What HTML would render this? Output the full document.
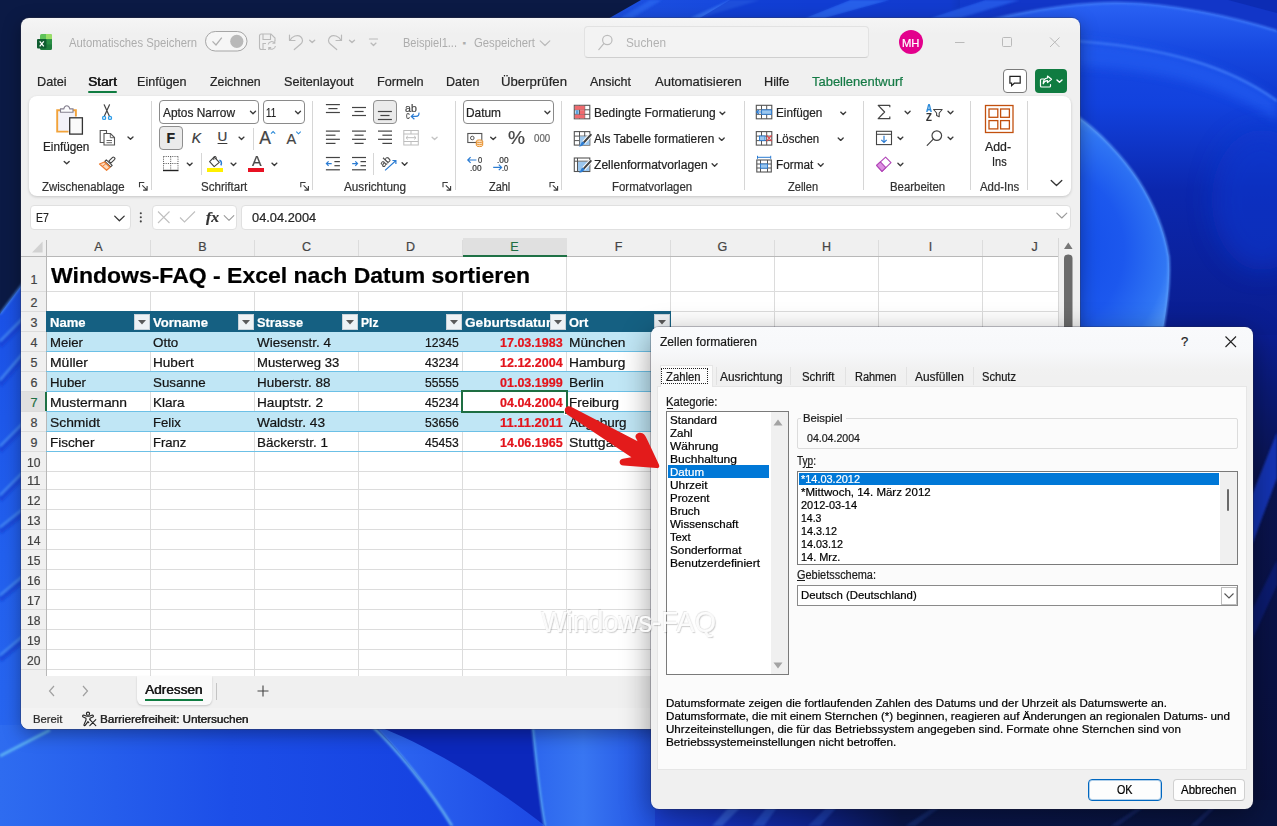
<!DOCTYPE html><html lang="de"><head><meta charset="utf-8"><title>Excel nach Datum sortieren</title><style>
*{box-sizing:border-box;margin:0;padding:0}
html,body{width:1277px;height:826px;overflow:hidden;background:#0b1b46;font-family:"Liberation Sans",sans-serif}
.t{position:absolute;white-space:nowrap;transform-origin:0 50%;display:inline-block;-webkit-text-stroke:.22px}
.a{position:absolute}
#wp{position:absolute;left:0;top:0}
#xl{position:absolute;left:21px;top:17.5px;width:1058.5px;height:711.5px;background:linear-gradient(#f5f5f5 0,#f0f0f0 16px);border-radius:8px;box-shadow:0 0 0 1px rgba(60,60,70,.32),0 5px 18px rgba(0,0,0,.35);overflow:hidden}
#dlg{position:absolute;left:651px;top:327px;width:602px;height:481.5px;background:linear-gradient(#f9fafc 0,#f7f8fa 24px,#f1f1f1 42px,#f0f0f0 50px);border-radius:8px;box-shadow:0 0 0 1px rgba(40,40,60,.28),0 8px 30px rgba(0,0,0,.4);overflow:hidden}
.card{position:absolute;background:#fff;border-radius:8px;box-shadow:0 1px 3px rgba(0,0,0,.18)}
.box{position:absolute;background:#fff;border:1px solid #e0e0e0;border-radius:4px}
.sep{position:absolute;width:1px;background:#d6d6d6}
svg{position:absolute;overflow:visible}
</style></head><body><svg id="wp" width="1277" height="826" viewBox="0 0 1277 826">
<defs>
<filter id="b2" x="-20%" y="-20%" width="140%" height="140%"><feGaussianBlur stdDeviation="1.2"/></filter>
<filter id="b6" x="-20%" y="-20%" width="140%" height="140%"><feGaussianBlur stdDeviation="5"/></filter>
<filter id="b12" x="-30%" y="-30%" width="160%" height="160%"><feGaussianBlur stdDeviation="12"/></filter>
<linearGradient id="gt" x1="0" y1="0" x2="1" y2="0"><stop offset="0" stop-color="#1c50e0"/><stop offset=".5" stop-color="#1444dc"/><stop offset="1" stop-color="#1848de"/></linearGradient>
<linearGradient id="gr" x1="0" y1="0" x2="0" y2="1"><stop offset="0" stop-color="#1a4ee6"/><stop offset=".3" stop-color="#1242de"/><stop offset=".55" stop-color="#0b27ae"/><stop offset="1" stop-color="#0a1c8c"/></linearGradient>
<linearGradient id="gAB" x1="0" y1="0" x2="0" y2="1"><stop offset="0" stop-color="#2a62f4"/><stop offset=".5" stop-color="#1648e0"/><stop offset="1" stop-color="#0e36cc"/></linearGradient>
<radialGradient id="gC" cx="1040" cy="250" r="140" gradientUnits="userSpaceOnUse"><stop offset="0" stop-color="#0f48e6"/><stop offset=".6" stop-color="#1c58ee"/><stop offset=".9" stop-color="#3076f4"/><stop offset="1" stop-color="#4a90f8"/></radialGradient>
<linearGradient id="gL" x1="0" y1="0" x2="0" y2="1"><stop offset="0" stop-color="#1a50e6"/><stop offset=".5" stop-color="#2260ee"/><stop offset="1" stop-color="#2a68f0"/></linearGradient>
<linearGradient id="gB" x1="0" y1="0" x2="1" y2="0"><stop offset="0" stop-color="#2e6cf0"/><stop offset=".35" stop-color="#1c4ee8"/><stop offset="1" stop-color="#0f36da"/></linearGradient>
<linearGradient id="gP" x1="0" y1="0" x2="1" y2="0"><stop offset="0" stop-color="#2e68f2"/><stop offset="1" stop-color="#1c48e4"/></linearGradient>
<linearGradient id="gE" x1="0" y1="0" x2="1" y2="0"><stop offset="0" stop-color="#2c66ee"/><stop offset=".4" stop-color="#3876f2"/><stop offset="1" stop-color="#2050e2"/></linearGradient>
</defs>
<rect width="1277" height="826" fill="#0b1a45"/>
<!-- right region (extends under the window) -->
<g>
<rect x="960" y="0" width="317" height="345" fill="url(#gr)"/>
<path d="M960 0H1277V31C1230 16 1170 4 1124 3C1090 2 1040 8 990 20L960 20Z" fill="#1236c8"/>
<path d="M990 20C1040 8 1090 2 1124 3C1170 4 1230 16 1277 31V101C1234 70 1171 48 1078 40L990 38Z" fill="url(#gAB)"/>
<path d="M1078 40C1171 48 1234 70 1277 101V120C1230 90 1170 70 1078 66Z" fill="#2864f6" opacity=".55" filter="url(#b6)"/>
<path d="M990 20C1040 8 1090 2 1124 3C1170 4 1230 16 1277 31" stroke="#3f7af8" stroke-width="2.2" fill="none" filter="url(#b2)"/>
<path d="M1060 40C1171 46 1234 70 1277 101" stroke="#3d78f8" stroke-width="2.2" fill="none" filter="url(#b2)"/>
<path d="M1228 0L1277 13V0Z" fill="#0c2cb4"/>
<ellipse cx="1262" cy="200" rx="50" ry="70" fill="#1038d0" opacity=".55" filter="url(#b12)"/>
<path d="M1078 117C1098 131 1122 156 1138 180C1152 202 1164 228 1168.600 257C1170.500 282 1167 308 1161 340H1078Z" fill="url(#gC)"/>
<path d="M1078 117C1098 131 1122 156 1138 180C1152 202 1164 228 1168.600 257C1170.500 282 1167 308 1161 340" stroke="#5a9cfa" stroke-width="2.2" fill="none" filter="url(#b2)" opacity=".9"/>
</g>
<!-- top strip -->
<linearGradient id="gt2" x1="606" y1="0" x2="1010" y2="0" gradientUnits="userSpaceOnUse"><stop offset="0" stop-color="#1c50e0"/><stop offset=".5" stop-color="#1444dc"/><stop offset=".85" stop-color="#1440d4"/><stop offset="1" stop-color="#1440d4" stop-opacity="0"/></linearGradient>
<path d="M641 0H1010V20H606Z" fill="url(#gt2)"/>
<g filter="url(#b2)" opacity=".75"><path d="M690 18L730 0H760L700 18Z" fill="#3a78f4"/><path d="M805 18L850 0H890L825 18Z" fill="#2e6af0"/><path d="M930 18L985 0H1020L960 18Z" fill="#2a62ee"/><path d="M620 18L650 0H662L632 18Z" fill="#2a66f0"/></g>
<path d="M730 0L700 18H805L850 0Z" fill="#0f38cc" opacity=".55"/><path d="M890 0L825 18H930L985 0Z" fill="#0f36c8" opacity=".45"/>
<!-- right strip beside dialog -->
<linearGradient id="gS" x1="0" y1="327" x2="0" y2="826" gradientUnits="userSpaceOnUse"><stop offset="0" stop-color="#0b1e96"/><stop offset=".12" stop-color="#0a1a78"/><stop offset=".3" stop-color="#0a1450"/><stop offset="1" stop-color="#080f3a"/></linearGradient>
<rect x="1246" y="335" width="31" height="491" fill="url(#gS)"/>
<path d="M1277 432V478L1252 545V495Z" fill="#1838c0" filter="url(#b2)" opacity=".9"/>
<path d="M1277 560V585L1252 640V610Z" fill="#10248a" filter="url(#b2)" opacity=".6"/>
<!-- left strip -->
<path d="M0 314L24 282V826H0Z" fill="url(#gL)"/>
<g filter="url(#b2)"><g stroke="#0f3cd0" stroke-width="5" fill="none" opacity=".55"><path d="M0 346L24 322"/><path d="M0 385L24 357"/><path d="M0 451L24 427"/><path d="M0 500L24 476"/><path d="M0 532L24 513"/><path d="M0 600L24 580"/><path d="M0 660L24 640"/></g>
<g stroke="#4e92f6" stroke-width="2" fill="none" opacity=".85"><path d="M0 314L24 282"/><path d="M0 341L24 317"/><path d="M0 380L24 352"/><path d="M0 446L24 422"/><path d="M0 495L24 471"/><path d="M0 527L24 508"/><path d="M0 595L24 575"/><path d="M0 655L24 635"/></g></g>
<!-- bottom -->
<rect x="0" y="725" width="660" height="101" fill="url(#gB)"/>
<path d="M371 725C396 748 430 790 452 826H560V725Z" fill="#0c28bc"/>
<path d="M374 725C430 745 500 790 545 826H452C430 790 398 748 374 725Z" fill="url(#gP)"/>
<path d="M371 725C396 748 430 790 452 826" stroke="#62b0f2" stroke-width="2.4" fill="none" filter="url(#b2)"/>
<path d="M532 725C536 760 540 800 545 826H660V725Z" fill="url(#gE)"/>
<path d="M532.500 725C536 760 540 800 545 826" stroke="#58a8f0" stroke-width="2" fill="none" filter="url(#b2)"/>
<path d="M0 756L50 730" stroke="#5cb0f4" stroke-width="3" fill="none" filter="url(#b2)"/>
<linearGradient id="gU" x1="651" y1="0" x2="1277" y2="0" gradientUnits="userSpaceOnUse"><stop offset="0" stop-color="#1c42da"/><stop offset=".1" stop-color="#1634c4"/><stop offset=".25" stop-color="#10269a"/><stop offset=".4" stop-color="#0a174e"/><stop offset="1" stop-color="#09143f"/></linearGradient><rect x="655" y="800" width="622" height="26" fill="url(#gU)"/><g filter="url(#b2)" opacity=".7"><path d="M712 826L730 806H742L722 826Z" fill="#3a6ce6"/><path d="M752 826L768 806H778L764 826Z" fill="#2c5ad8"/><path d="M808 826L828 806H838L820 826Z" fill="#2248c0"/><path d="M905 826L935 806H942L915 826Z" fill="#16307c"/><path d="M1110 826L1140 806H1146L1118 826Z" fill="#142a70"/><path d="M1190 826L1212 806H1217L1197 826Z" fill="#142a70"/></g>
</svg><div id="xl"></div><div class="card" style="left:29px;top:96px;width:1042px;height:100px"></div><div class="box" style="left:30px;top:204.5px;width:100.5px;height:25px"></div><div class="box" style="left:152px;top:204.5px;width:85px;height:25px"></div><div class="box" style="left:241px;top:204.5px;width:830px;height:25px"></div><span class="t" id="t0" style="font-size:12px;line-height:16px;top:34.5px;color:#adadad;left:69.4px;transform:scaleX(0.9406);-webkit-text-stroke:0;">Automatisches Speichern</span><span class="t" id="t1" style="font-size:12px;line-height:16px;top:34.5px;color:#adadad;left:403.4px;transform:scaleX(0.9199);-webkit-text-stroke:0;">Beispiel1...</span><span class="t" id="t2" style="font-size:9px;line-height:12px;top:36.8px;color:#adadad;left:462.5px;">▪</span><span class="t" id="t3" style="font-size:12px;line-height:16px;top:34.5px;color:#adadad;left:473.6px;transform:scaleX(0.9428);-webkit-text-stroke:0;">Gespeichert</span><div class="a" style="left:584px;top:26px;width:285px;height:32px;background:#f3f3f3;border:1px solid #e2e2e2;border-bottom-color:#cfcfcf;border-radius:4px"></div><span class="t" id="t4" style="font-size:12.5px;line-height:16px;top:34.5px;color:#b2b2b2;left:626.0px;transform:scaleX(0.9433);-webkit-text-stroke:0;">Suchen</span><div class="a" style="left:899px;top:30px;width:24px;height:24px;border-radius:50%;background:#e3008c"></div><span class="t" id="t5" style="font-size:11px;line-height:14px;top:35.5px;color:#fff;left:902.2px;transform:scaleX(1.0228);">MH</span><span class="t" id="t6" style="font-size:13.5px;line-height:18px;top:72.5px;color:#242424;left:37.1px;transform:scaleX(0.9392);">Datei</span><span class="t" id="t7" style="font-size:13.5px;line-height:18px;top:72.5px;color:#242424;left:137.1px;transform:scaleX(0.9306);">Einfügen</span><span class="t" id="t8" style="font-size:13.5px;line-height:18px;top:72.5px;color:#242424;left:210.0px;transform:scaleX(0.9127);">Zeichnen</span><span class="t" id="t9" style="font-size:13.5px;line-height:18px;top:72.5px;color:#242424;left:284.4px;transform:scaleX(0.9366);">Seitenlayout</span><span class="t" id="t10" style="font-size:13.5px;line-height:18px;top:72.5px;color:#242424;left:377.1px;transform:scaleX(0.9411);">Formeln</span><span class="t" id="t11" style="font-size:13.5px;line-height:18px;top:72.5px;color:#242424;left:446.3px;transform:scaleX(0.9297);">Daten</span><span class="t" id="t12" style="font-size:13.5px;line-height:18px;top:72.5px;color:#242424;left:501.2px;transform:scaleX(0.9771);">Überprüfen</span><span class="t" id="t13" style="font-size:13.5px;line-height:18px;top:72.5px;color:#242424;left:590.0px;transform:scaleX(0.9259);">Ansicht</span><span class="t" id="t14" style="font-size:13.5px;line-height:18px;top:72.5px;color:#242424;left:655.0px;transform:scaleX(0.9628);">Automatisieren</span><span class="t" id="t15" style="font-size:13.5px;line-height:18px;top:72.5px;color:#242424;left:764.2px;transform:scaleX(0.9402);">Hilfe</span><span class="t" id="t16" style="font-size:13.5px;line-height:18px;top:72.5px;color:#1a1a1a;left:88.2px;transform:scaleX(1.0100);text-shadow:.4px 0 0 #1a1a1a;">Start</span><span class="t" id="t17" style="font-size:13.5px;line-height:18px;top:72.5px;color:#157a45;left:812.0px;transform:scaleX(0.9602);">Tabellenentwurf</span><div class="a" style="left:88px;top:90.5px;width:29px;height:2.5px;border-radius:2px;background:#107c41"></div><div class="a" style="left:1003px;top:69px;width:23.8px;height:24px;background:#fff;border:1px solid #7a7a7a;border-radius:4px"></div><div class="a" style="left:1035px;top:69px;width:32px;height:24px;background:#107c41;border-radius:4px"></div><div class="sep" style="left:150.6px;top:101px;height:89px"></div><div class="sep" style="left:312px;top:101px;height:89px"></div><div class="sep" style="left:454.6px;top:101px;height:89px"></div><div class="sep" style="left:561.4px;top:101px;height:89px"></div><div class="sep" style="left:743.5px;top:101px;height:89px"></div><div class="sep" style="left:863.4px;top:101px;height:89px"></div><div class="sep" style="left:969.7px;top:101px;height:89px"></div><div class="sep" style="left:1027.4px;top:101px;height:89px"></div><span class="t" id="t18" style="font-size:12px;line-height:16px;top:139.0px;color:#242424;left:43.3px;transform:scaleX(0.9794);">Einfügen</span><span class="t" id="t19" style="font-size:12px;line-height:16px;top:178.6px;color:#333;left:42.0px;transform:scaleX(0.9514);">Zwischenablage</span><div class="a" style="left:159.3px;top:100px;width:100px;height:23.5px;background:#fff;border:1px solid #8a8a8a;border-radius:4px"></div><div class="a" style="left:262.6px;top:100px;width:42px;height:23.5px;background:#fff;border:1px solid #8a8a8a;border-radius:4px"></div><span class="t" id="t20" style="font-size:13px;line-height:17px;top:103.5px;color:#242424;left:162.9px;transform:scaleX(0.9143);">Aptos Narrow</span><span class="t" id="t21" style="font-size:13px;line-height:17px;top:103.5px;color:#242424;left:266.0px;transform:scaleX(0.7407);">11</span><div class="a" style="left:159.3px;top:126.3px;width:23.7px;height:23.4px;background:#ebebeb;border:1px solid #8f8f8f;border-radius:4px"></div><span class="t" id="t22" style="font-size:14px;line-height:18px;top:128.5px;color:#222;font-weight:700;left:166.5px;">F</span><span class="t" id="t23" style="font-size:14px;line-height:18px;top:128.5px;color:#3a3a3a;font-style:italic;left:191.7px;">K</span><span class="t" id="t24" style="font-size:13.5px;line-height:18px;top:128.0px;color:#3a3a3a;left:217.6px;text-decoration:underline;text-underline-offset:2px;">U</span><div class="sep" style="left:252.6px;top:127.5px;height:22px"></div><span class="t" id="t25" style="font-size:17.5px;line-height:23px;top:126.5px;color:#444;left:259.2px;">A</span><span class="t" id="t26" style="font-size:14.5px;line-height:19px;top:130.0px;color:#444;left:286.6px;">A</span><div class="sep" style="left:200.5px;top:152.5px;height:22px"></div><span class="t" id="t27" style="font-size:14px;line-height:18px;top:152.3px;color:#4a4a4a;left:251.7px;transform:scaleX(1.0274);">A</span><div class="a" style="left:206.7px;top:168.2px;width:16.3px;height:3.6px;background:#fff000"></div><div class="a" style="left:248px;top:168.2px;width:16px;height:3.6px;background:#e81123"></div><span class="t" id="t28" style="font-size:12px;line-height:16px;top:178.6px;color:#333;left:200.5px;transform:scaleX(0.9643);">Schriftart</span><div class="a" style="left:373.2px;top:100px;width:23.5px;height:23.8px;background:#ebebeb;border:1px solid #8f8f8f;border-radius:4px"></div><div class="sep" style="left:373.4px;top:152.5px;height:22px"></div><span class="t" id="t29" style="font-size:12px;line-height:16px;top:178.6px;color:#333;left:344.4px;transform:scaleX(0.9783);">Ausrichtung</span><div class="a" style="left:463.4px;top:100px;width:90.2px;height:23.5px;background:#fff;border:1px solid #8a8a8a;border-radius:4px"></div><span class="t" id="t30" style="font-size:13px;line-height:17px;top:103.5px;color:#242424;left:466.2px;transform:scaleX(0.9139);">Datum</span><span class="t" id="t31" style="font-size:19px;line-height:25px;top:125.0px;color:#444;left:507.5px;transform:scaleX(1.0055);">%</span><span class="t" id="t32" style="font-size:10.5px;line-height:14px;top:130.6px;color:#666;left:533.8px;transform:scaleX(0.9241);">000</span><span class="t" id="t33" style="font-size:12px;line-height:16px;top:178.6px;color:#333;left:489.2px;transform:scaleX(0.9124);">Zahl</span><span class="t" id="t34" style="font-size:12.5px;line-height:16px;top:105.0px;color:#242424;left:594.3px;transform:scaleX(0.9563);">Bedingte Formatierung</span><span class="t" id="t35" style="font-size:12.5px;line-height:16px;top:130.9px;color:#242424;left:594.3px;transform:scaleX(0.9478);">Als Tabelle formatieren</span><span class="t" id="t36" style="font-size:12.5px;line-height:16px;top:156.7px;color:#242424;left:594.3px;transform:scaleX(0.9675);">Zellenformatvorlagen</span><span class="t" id="t37" style="font-size:12px;line-height:16px;top:178.6px;color:#333;left:612.1px;transform:scaleX(0.9542);">Formatvorlagen</span><span class="t" id="t38" style="font-size:12.5px;line-height:16px;top:105.0px;color:#242424;left:776.3px;transform:scaleX(0.9400);">Einfügen</span><span class="t" id="t39" style="font-size:12.5px;line-height:16px;top:130.9px;color:#242424;left:776.3px;transform:scaleX(0.9119);">Löschen</span><span class="t" id="t40" style="font-size:12.5px;line-height:16px;top:156.7px;color:#242424;left:776.3px;transform:scaleX(0.9421);">Format</span><span class="t" id="t41" style="font-size:12px;line-height:16px;top:178.6px;color:#333;left:788.0px;transform:scaleX(0.9208);">Zellen</span><span class="t" id="t42" style="font-size:12px;line-height:16px;top:178.6px;color:#333;left:889.5px;transform:scaleX(0.9492);">Bearbeiten</span><span class="t" id="t43" style="font-size:13px;line-height:17px;top:137.5px;color:#242424;left:985.4px;transform:scaleX(0.9465);">Add-</span><span class="t" id="t44" style="font-size:13px;line-height:17px;top:153.1px;color:#242424;left:991.5px;transform:scaleX(0.8418);">Ins</span><span class="t" id="t45" style="font-size:12px;line-height:16px;top:178.6px;color:#333;left:979.5px;transform:scaleX(0.9478);">Add-Ins</span><span class="t" id="t46" style="font-size:13px;line-height:17px;top:208.5px;color:#242424;left:36.4px;transform:scaleX(0.8047);">E7</span><span class="t" id="t47" style="font-size:15px;line-height:20px;top:206.5px;color:#333;font-style:italic;left:205.5px;transform:scaleX(1.0400);font-family:'Liberation Serif',serif;font-weight:700;">fx</span><span class="t" id="t48" style="font-size:13px;line-height:17px;top:208.5px;color:#242424;left:251.6px;transform:scaleX(0.9865);">04.04.2004</span><div class="a" style="left:46px;top:256px;width:1012px;height:420px;background:#fff"></div><svg width="1277" height="826" style="left:0;top:0"><g stroke="#dcdcdc" stroke-width="1" fill="none"><path d="M150.5 240V676"/><path d="M254.5 240V676"/><path d="M358.5 240V676"/><path d="M462.5 240V676"/><path d="M566.5 240V676"/><path d="M670.5 240V676"/><path d="M774.5 240V676"/><path d="M878.5 240V676"/><path d="M982.5 240V676"/><path d="M21 291.5H1058"/><path d="M21 311.5H1058"/><path d="M21 331.5H1058"/><path d="M21 351.5H1058"/><path d="M21 371.5H1058"/><path d="M21 391.5H1058"/><path d="M21 411.5H1058"/><path d="M21 431.5H1058"/><path d="M21 451.5H1058"/><path d="M21 471.5H1058"/><path d="M21 489.5H1058"/><path d="M21 509.5H1058"/><path d="M21 529.5H1058"/><path d="M21 549.5H1058"/><path d="M21 569.5H1058"/><path d="M21 589.5H1058"/><path d="M21 609.5H1058"/><path d="M21 629.5H1058"/><path d="M21 649.5H1058"/><path d="M21 669.5H1058"/></g><path d="M21 256.5H1058M46.5 240V676" stroke="#b8b8b8" fill="none"/><path d="M1058.5 238V676" stroke="#d8d8d8" fill="none"/><path d="M42.6 241.5V252.6H32Z" fill="#d2d2d2"/></svg><div class="a" style="left:47px;top:257px;width:519px;height:34px;background:#fff"></div><div class="a" style="left:463px;top:238px;width:104px;height:19px;background:#e0e0e0;border-bottom:2px solid #1f7145"></div><div class="a" style="left:21px;top:392px;width:26px;height:19px;background:#e0e0e0;border-right:2px solid #1f7145"></div><span class="t" id="t49" style="font-size:12.5px;line-height:16px;top:239.0px;color:#444;left:94.3px;">A</span><span class="t" id="t50" style="font-size:12.5px;line-height:16px;top:239.0px;color:#444;left:198.3px;">B</span><span class="t" id="t51" style="font-size:12.5px;line-height:16px;top:239.0px;color:#444;left:302.0px;">C</span><span class="t" id="t52" style="font-size:12.5px;line-height:16px;top:239.0px;color:#444;left:406.0px;">D</span><span class="t" id="t53" style="font-size:12.5px;line-height:16px;top:239.0px;color:#1f6e43;left:510.3px;">E</span><span class="t" id="t54" style="font-size:12.5px;line-height:16px;top:239.0px;color:#444;left:614.7px;">F</span><span class="t" id="t55" style="font-size:12.5px;line-height:16px;top:239.0px;color:#444;left:717.6px;">G</span><span class="t" id="t56" style="font-size:12.5px;line-height:16px;top:239.0px;color:#444;left:822.0px;">H</span><span class="t" id="t57" style="font-size:12.5px;line-height:16px;top:239.0px;color:#444;left:928.8px;">I</span><span class="t" id="t58" style="font-size:12.5px;line-height:16px;top:239.0px;color:#444;left:1031.4px;">J</span><span class="t" id="t59" style="font-size:12.5px;line-height:16px;top:272.2px;color:#444;left:30.5px;">1</span><span class="t" id="t60" style="font-size:12.5px;line-height:16px;top:295.2px;color:#444;left:30.5px;">2</span><span class="t" id="t61" style="font-size:12.5px;line-height:16px;top:315.2px;color:#444;left:30.5px;">3</span><span class="t" id="t62" style="font-size:12.5px;line-height:16px;top:335.2px;color:#444;left:30.5px;">4</span><span class="t" id="t63" style="font-size:12.5px;line-height:16px;top:355.2px;color:#444;left:30.5px;">5</span><span class="t" id="t64" style="font-size:12.5px;line-height:16px;top:375.2px;color:#444;left:30.5px;">6</span><span class="t" id="t65" style="font-size:12.5px;line-height:16px;top:395.2px;color:#1f6e43;left:30.5px;">7</span><span class="t" id="t66" style="font-size:12.5px;line-height:16px;top:415.2px;color:#444;left:30.5px;">8</span><span class="t" id="t67" style="font-size:12.5px;line-height:16px;top:435.2px;color:#444;left:30.5px;">9</span><span class="t" id="t68" style="font-size:12.5px;line-height:16px;top:455.2px;color:#444;left:27.2px;transform:scaleX(0.9708);">10</span><span class="t" id="t69" style="font-size:12.5px;line-height:16px;top:473.2px;color:#444;left:27.2px;transform:scaleX(1.0397);">11</span><span class="t" id="t70" style="font-size:12.5px;line-height:16px;top:493.2px;color:#444;left:27.2px;transform:scaleX(0.9708);">12</span><span class="t" id="t71" style="font-size:12.5px;line-height:16px;top:513.2px;color:#444;left:27.2px;transform:scaleX(0.9708);">13</span><span class="t" id="t72" style="font-size:12.5px;line-height:16px;top:533.2px;color:#444;left:27.2px;transform:scaleX(0.9708);">14</span><span class="t" id="t73" style="font-size:12.5px;line-height:16px;top:553.2px;color:#444;left:27.2px;transform:scaleX(0.9708);">15</span><span class="t" id="t74" style="font-size:12.5px;line-height:16px;top:573.2px;color:#444;left:27.2px;transform:scaleX(0.9708);">16</span><span class="t" id="t75" style="font-size:12.5px;line-height:16px;top:593.2px;color:#444;left:27.2px;transform:scaleX(0.9708);">17</span><span class="t" id="t76" style="font-size:12.5px;line-height:16px;top:613.2px;color:#444;left:27.2px;transform:scaleX(0.9708);">18</span><span class="t" id="t77" style="font-size:12.5px;line-height:16px;top:633.2px;color:#444;left:27.2px;transform:scaleX(0.9708);">19</span><span class="t" id="t78" style="font-size:12.5px;line-height:16px;top:653.2px;color:#444;left:27.2px;transform:scaleX(0.9708);">20</span><span class="t" id="t79" style="font-size:22.5px;line-height:29px;top:261.0px;color:#000;font-weight:700;left:51.0px;transform:scaleX(1.0221);">Windows-FAQ - Excel nach Datum sortieren</span><div class="a" style="left:46px;top:311px;width:625px;height:21px;background:#156082"></div><div class="a" style="left:47px;top:332px;width:624px;height:20px;background:#c0e6f5"></div><div class="a" style="left:47px;top:372px;width:624px;height:20px;background:#c0e6f5"></div><div class="a" style="left:47px;top:412px;width:624px;height:20px;background:#c0e6f5"></div><svg width="1277" height="826" style="left:0;top:0"><g stroke="#6cc0e6" fill="none"><path d="M46 351.5H671"/><path d="M46 371.5H671"/><path d="M46 391.5H671"/><path d="M46 411.5H671"/><path d="M46 431.5H671"/><path d="M46 451.5H671"/></g></svg><span class="t" id="t80" style="font-size:13px;line-height:17px;top:313.5px;color:#fff;font-weight:700;left:49.5px;transform:scaleX(1.0050);">Name</span><span class="t" id="t81" style="font-size:13px;line-height:17px;top:313.5px;color:#fff;font-weight:700;left:153.3px;transform:scaleX(1.0060);">Vorname</span><span class="t" id="t82" style="font-size:13px;line-height:17px;top:313.5px;color:#fff;font-weight:700;left:257.3px;transform:scaleX(0.9790);">Strasse</span><span class="t" id="t83" style="font-size:13px;line-height:17px;top:313.5px;color:#fff;font-weight:700;left:361.3px;transform:scaleX(0.9310);">Plz</span><span class="t" id="t84" style="font-size:13px;line-height:17px;top:313.5px;color:#fff;font-weight:700;left:569.3px;transform:scaleX(0.9897);">Ort</span><div class="a" style="left:463px;top:312px;width:86.5px;height:19px;overflow:hidden"><span class="t" id="t85" style="font-size:13px;line-height:17px;top:1.5px;color:#fff;font-weight:700;left:2.3px;transform:scaleX(1.0468);">Geburtsdatum</span></div><div class="a" style="left:133.5px;top:313.5px;width:16px;height:16px;background:#eef2f5;border:1px solid #c9d3da"></div><svg width="8" height="5" style="left:137.5px;top:319.5px"><path d="M0 0H8L4 4.6Z" fill="#5a5a5a"/></svg><div class="a" style="left:237.5px;top:313.5px;width:16px;height:16px;background:#eef2f5;border:1px solid #c9d3da"></div><svg width="8" height="5" style="left:241.5px;top:319.5px"><path d="M0 0H8L4 4.6Z" fill="#5a5a5a"/></svg><div class="a" style="left:341.5px;top:313.5px;width:16px;height:16px;background:#eef2f5;border:1px solid #c9d3da"></div><svg width="8" height="5" style="left:345.5px;top:319.5px"><path d="M0 0H8L4 4.6Z" fill="#5a5a5a"/></svg><div class="a" style="left:445.5px;top:313.5px;width:16px;height:16px;background:#eef2f5;border:1px solid #c9d3da"></div><svg width="8" height="5" style="left:449.5px;top:319.5px"><path d="M0 0H8L4 4.6Z" fill="#5a5a5a"/></svg><div class="a" style="left:549.5px;top:313.5px;width:16px;height:16px;background:#eef2f5;border:1px solid #c9d3da"></div><svg width="8" height="5" style="left:553.5px;top:319.5px"><path d="M0 0H8L4 4.6Z" fill="#5a5a5a"/></svg><div class="a" style="left:653.5px;top:313.5px;width:16px;height:16px;background:#eef2f5;border:1px solid #c9d3da"></div><svg width="8" height="5" style="left:657.5px;top:319.5px"><path d="M0 0H8L4 4.6Z" fill="#5a5a5a"/></svg><span class="t" id="t86" style="font-size:13px;line-height:17px;top:334.0px;color:#141414;left:49.5px;transform:scaleX(1.0149);">Meier</span><span class="t" id="t87" style="font-size:13px;line-height:17px;top:334.0px;color:#141414;left:153.3px;transform:scaleX(1.0294);">Otto</span><span class="t" id="t88" style="font-size:13px;line-height:17px;top:334.0px;color:#141414;left:257.3px;transform:scaleX(1.0345);">Wiesenstr. 4</span><span class="t" id="t89" style="font-size:13px;line-height:17px;top:334.0px;color:#141414;left:425.2px;transform:scaleX(0.9348);">12345</span><span class="t" id="t90" style="font-size:13px;line-height:17px;top:334.0px;color:#e3141c;font-weight:700;left:500.4px;transform:scaleX(0.9619);">17.03.1983</span><span class="t" id="t91" style="font-size:13px;line-height:17px;top:334.0px;color:#141414;left:569.3px;transform:scaleX(1.0545);">München</span><span class="t" id="t92" style="font-size:13px;line-height:17px;top:354.0px;color:#141414;left:49.5px;transform:scaleX(1.0733);">Müller</span><span class="t" id="t93" style="font-size:13px;line-height:17px;top:354.0px;color:#141414;left:153.3px;transform:scaleX(1.0453);">Hubert</span><span class="t" id="t94" style="font-size:13px;line-height:17px;top:354.0px;color:#141414;left:257.3px;transform:scaleX(1.0067);">Musterweg 33</span><span class="t" id="t95" style="font-size:13px;line-height:17px;top:354.0px;color:#141414;left:425.2px;transform:scaleX(0.9348);">43234</span><span class="t" id="t96" style="font-size:13px;line-height:17px;top:354.0px;color:#e3141c;font-weight:700;left:500.4px;transform:scaleX(0.9619);">12.12.2004</span><span class="t" id="t97" style="font-size:13px;line-height:17px;top:354.0px;color:#141414;left:569.3px;transform:scaleX(1.0548);">Hamburg</span><span class="t" id="t98" style="font-size:13px;line-height:17px;top:374.0px;color:#141414;left:49.5px;transform:scaleX(1.0163);">Huber</span><span class="t" id="t99" style="font-size:13px;line-height:17px;top:374.0px;color:#141414;left:153.3px;transform:scaleX(1.0248);">Susanne</span><span class="t" id="t100" style="font-size:13px;line-height:17px;top:374.0px;color:#141414;left:257.3px;transform:scaleX(1.0363);">Huberstr. 88</span><span class="t" id="t101" style="font-size:13px;line-height:17px;top:374.0px;color:#141414;left:425.2px;transform:scaleX(0.9348);">55555</span><span class="t" id="t102" style="font-size:13px;line-height:17px;top:374.0px;color:#e3141c;font-weight:700;left:500.4px;transform:scaleX(0.9619);">01.03.1999</span><span class="t" id="t103" style="font-size:13px;line-height:17px;top:374.0px;color:#141414;left:569.3px;transform:scaleX(1.0526);">Berlin</span><span class="t" id="t104" style="font-size:13px;line-height:17px;top:394.0px;color:#141414;left:49.5px;transform:scaleX(1.0657);">Mustermann</span><span class="t" id="t105" style="font-size:13px;line-height:17px;top:394.0px;color:#141414;left:153.3px;transform:scaleX(1.0409);">Klara</span><span class="t" id="t106" style="font-size:13px;line-height:17px;top:394.0px;color:#141414;left:257.3px;transform:scaleX(1.0497);">Hauptstr. 2</span><span class="t" id="t107" style="font-size:13px;line-height:17px;top:394.0px;color:#141414;left:425.2px;transform:scaleX(0.9348);">45234</span><span class="t" id="t108" style="font-size:13px;line-height:17px;top:394.0px;color:#e3141c;font-weight:700;left:500.4px;transform:scaleX(0.9619);">04.04.2004</span><span class="t" id="t109" style="font-size:13px;line-height:17px;top:394.0px;color:#141414;left:569.3px;transform:scaleX(1.0326);">Freiburg</span><span class="t" id="t110" style="font-size:13px;line-height:17px;top:414.0px;color:#141414;left:49.5px;transform:scaleX(1.0645);">Schmidt</span><span class="t" id="t111" style="font-size:13px;line-height:17px;top:414.0px;color:#141414;left:153.3px;transform:scaleX(1.0126);">Felix</span><span class="t" id="t112" style="font-size:13px;line-height:17px;top:414.0px;color:#141414;left:257.3px;transform:scaleX(1.0535);">Waldstr. 43</span><span class="t" id="t113" style="font-size:13px;line-height:17px;top:414.0px;color:#141414;left:425.2px;transform:scaleX(0.9348);">53656</span><span class="t" id="t114" style="font-size:13px;line-height:17px;top:414.0px;color:#e3141c;font-weight:700;left:500.4px;transform:scaleX(0.9949);">11.11.2011</span><span class="t" id="t115" style="font-size:13px;line-height:17px;top:414.0px;color:#141414;left:569.3px;transform:scaleX(1.0349);">Augsburg</span><span class="t" id="t116" style="font-size:13px;line-height:17px;top:434.0px;color:#141414;left:49.5px;transform:scaleX(1.0416);">Fischer</span><span class="t" id="t117" style="font-size:13px;line-height:17px;top:434.0px;color:#141414;left:153.3px;transform:scaleX(1.0020);">Franz</span><span class="t" id="t118" style="font-size:13px;line-height:17px;top:434.0px;color:#141414;left:257.3px;transform:scaleX(1.0344);">Bäckerstr. 1</span><span class="t" id="t119" style="font-size:13px;line-height:17px;top:434.0px;color:#141414;left:425.2px;transform:scaleX(0.9348);">45453</span><span class="t" id="t120" style="font-size:13px;line-height:17px;top:434.0px;color:#e3141c;font-weight:700;left:500.4px;transform:scaleX(0.9619);">14.06.1965</span><span class="t" id="t121" style="font-size:13px;line-height:17px;top:434.0px;color:#141414;left:569.3px;transform:scaleX(1.0785);">Stuttgart</span><div class="a" style="left:461px;top:390px;width:106.5px;height:23px;border:2px solid #1e6e42"></div><div class="a" style="left:563.5px;top:408.5px;width:6px;height:6px;background:#1e6e42;border:1px solid #fff"></div><svg width="20" height="100" style="left:1060px;top:238px"><path d="M4 11L8.3 4.5L12.600 11Z" fill="#777"/><rect x="4" y="16.500" width="8.500" height="80" rx="4" fill="#6b6b6b"/></svg><div class="a" style="left:137px;top:676px;width:75px;height:29px;background:#fafafa;border-radius:0 0 6px 6px;box-shadow:0 1px 2px rgba(0,0,0,.18)"></div><span class="t" id="t122" style="font-size:13.5px;line-height:18px;top:680.6px;color:#1a1a1a;left:145.2px;transform:scaleX(1.0062);text-shadow:.4px 0 0 #1a1a1a;">Adressen</span><div class="a" style="left:145px;top:698.5px;width:58px;height:2px;background:#107c41"></div><div class="sep" style="left:215.5px;top:683px;height:17px;background:#c4c4c4"></div><svg width="300" height="20" style="left:40px;top:681px"><g fill="none" stroke="#a0a0a0" stroke-width="1.2"><path d="M14 5L9.5 10L14 15"/><path d="M43 5L47.5 10L43 15"/></g><path d="M223 4.5V15.5M217.5 10H228.5" stroke="#444" stroke-width="1.1" fill="none"/></svg><div class="a" style="left:21px;top:708px;width:1058.5px;height:21px;background:#f3f3f3;border-radius:0 0 8px 8px"></div><span class="t" id="t123" style="font-size:11.5px;line-height:15px;top:711.5px;color:#2a2a2a;left:33.0px;transform:scaleX(0.9818);">Bereit</span><span class="t" id="t124" style="font-size:11.5px;line-height:15px;top:711.5px;color:#2a2a2a;left:100.3px;transform:scaleX(1.0087);text-shadow:.35px 0 0 #2a2a2a;">Barrierefreiheit: Untersuchen</span><div id="dlg"></div><span class="t" id="t125" style="font-size:12px;line-height:16px;top:334.0px;color:#1a1a1a;left:660.0px;transform:scaleX(1.0029);">Zellen formatieren</span><span class="t" id="t126" style="font-size:13px;line-height:17px;top:333.0px;color:#222;left:1181.0px;">?</span><svg width="12" height="12" style="left:1224.5px;top:335.5px"><path d="M.5 .5L11 11M11 .5L.5 11" stroke="#222" stroke-width="1.1" fill="none"/></svg><div class="a" style="left:657px;top:385.5px;width:589.5px;height:384px;background:#fbfbfb;border:1px solid #e6e6e6"></div><div class="a" style="left:659.5px;top:365px;width:53.5px;height:22px;background:#fbfbfb;border:1px solid #e6e6e6;border-bottom:none"></div><div class="a" style="left:661.3px;top:368px;width:46.5px;height:15.5px;border:1px dotted #222"></div><div class="sep" style="left:716px;top:367px;height:18px;background:#e2e2e2"></div><div class="sep" style="left:790.4px;top:367px;height:18px;background:#e2e2e2"></div><div class="sep" style="left:844.7px;top:367px;height:18px;background:#e2e2e2"></div><div class="sep" style="left:905.7px;top:367px;height:18px;background:#e2e2e2"></div><div class="sep" style="left:973px;top:367px;height:18px;background:#e2e2e2"></div><span class="t" id="t127" style="font-size:12px;line-height:16px;top:368.8px;color:#1a1a1a;left:666.0px;transform:scaleX(0.9427);">Zahlen</span><span class="t" id="t128" style="font-size:12px;line-height:16px;top:368.8px;color:#1a1a1a;left:720.2px;transform:scaleX(0.9878);">Ausrichtung</span><span class="t" id="t129" style="font-size:12px;line-height:16px;top:368.8px;color:#1a1a1a;left:802.4px;transform:scaleX(0.9496);">Schrift</span><span class="t" id="t130" style="font-size:12px;line-height:16px;top:368.8px;color:#1a1a1a;left:855.0px;transform:scaleX(0.9127);">Rahmen</span><span class="t" id="t131" style="font-size:12px;line-height:16px;top:368.8px;color:#1a1a1a;left:914.8px;transform:scaleX(0.9924);">Ausfüllen</span><span class="t" id="t132" style="font-size:12px;line-height:16px;top:368.8px;color:#1a1a1a;left:982.1px;transform:scaleX(0.9267);">Schutz</span><span class="t" id="t133" style="font-size:12px;line-height:16px;top:394.2px;color:#1a1a1a;left:666.3px;transform:scaleX(0.9396);">Kategorie:</span><div class="a" style="left:666.6px;top:407.6px;width:6px;height:1px;background:#1a1a1a"></div><div class="a" style="left:666px;top:411px;width:122.5px;height:264px;background:#fff;border:1px solid #7a7a7a"></div><div class="a" style="left:771px;top:412px;width:16.5px;height:262px;background:#f0f0f0"></div><svg width="16" height="262" style="left:770px;top:412.5px"><path d="M3.5 12.5L8 6.5L12.5 12.5Z" fill="#a3a3a3"/><path d="M3.5 249.500L8 255.500L12.5 249.500Z" fill="#a3a3a3"/></svg><div class="a" style="left:668.4px;top:464.8px;width:101px;height:13.2px;background:#0078d7"></div><span class="t" id="t134" style="font-size:11.5px;line-height:15px;top:412.8px;color:#000;left:670.0px;transform:scaleX(1.0067);">Standard</span><span class="t" id="t135" style="font-size:11.5px;line-height:15px;top:425.8px;color:#000;left:670.0px;transform:scaleX(1.0056);">Zahl</span><span class="t" id="t136" style="font-size:11.5px;line-height:15px;top:438.8px;color:#000;left:670.0px;transform:scaleX(1.0392);">Währung</span><span class="t" id="t137" style="font-size:11.5px;line-height:15px;top:451.8px;color:#000;left:670.0px;transform:scaleX(1.0476);">Buchhaltung</span><span class="t" id="t138" style="font-size:11.5px;line-height:15px;top:464.8px;color:#fff;left:670.0px;transform:scaleX(1.0037);">Datum</span><span class="t" id="t139" style="font-size:11.5px;line-height:15px;top:477.8px;color:#000;left:670.0px;transform:scaleX(1.0292);">Uhrzeit</span><span class="t" id="t140" style="font-size:11.5px;line-height:15px;top:490.8px;color:#000;left:670.0px;transform:scaleX(0.9965);">Prozent</span><span class="t" id="t141" style="font-size:11.5px;line-height:15px;top:503.8px;color:#000;left:670.0px;transform:scaleX(0.9984);">Bruch</span><span class="t" id="t142" style="font-size:11.5px;line-height:15px;top:516.8px;color:#000;left:670.0px;transform:scaleX(1.0016);">Wissenschaft</span><span class="t" id="t143" style="font-size:11.5px;line-height:15px;top:529.8px;color:#000;left:670.0px;transform:scaleX(0.9718);">Text</span><span class="t" id="t144" style="font-size:11.5px;line-height:15px;top:542.8px;color:#000;left:670.0px;transform:scaleX(1.0260);">Sonderformat</span><span class="t" id="t145" style="font-size:11.5px;line-height:15px;top:555.8px;color:#000;left:670.0px;transform:scaleX(1.0350);">Benutzerdefiniert</span><div class="a" style="left:797px;top:418px;width:441px;height:30.5px;border:1px solid #dcdcdc;border-radius:2px"></div><div class="a" style="left:801px;top:412px;width:45px;height:12px;background:#fbfbfb"></div><span class="t" id="t146" style="font-size:11.5px;line-height:15px;top:410.7px;color:#1a1a1a;left:803.4px;transform:scaleX(0.9831);">Beispiel</span><span class="t" id="t147" style="font-size:11.5px;line-height:15px;top:431.0px;color:#1a1a1a;left:806.7px;transform:scaleX(0.9207);">04.04.2004</span><span class="t" id="t148" style="font-size:12px;line-height:16px;top:453.2px;color:#1a1a1a;left:797.1px;transform:scaleX(0.8375);">Typ:</span><div class="a" style="left:805.6px;top:466.6px;width:7px;height:1px;background:#1a1a1a"></div><div class="a" style="left:797px;top:470.5px;width:441px;height:94.5px;background:#fff;border:1px solid #7a7a7a"></div><div class="a" style="left:1220px;top:471.5px;width:17px;height:92.5px;background:#f0f0f0"></div><div class="a" style="left:1227.2px;top:488.6px;width:2px;height:22.5px;background:#6a6a6a;border-radius:1px"></div><div class="a" style="left:798.6px;top:472.6px;width:420.4px;height:12.2px;background:#0078d7"></div><span class="t" id="t149" style="font-size:11.5px;line-height:15px;top:472.1px;color:#fff;left:801.1px;transform:scaleX(0.9509);">*14.03.2012</span><span class="t" id="t150" style="font-size:11.5px;line-height:15px;top:485.1px;color:#000;left:801.1px;transform:scaleX(0.9995);">*Mittwoch, 14. März 2012</span><span class="t" id="t151" style="font-size:11.5px;line-height:15px;top:498.1px;color:#000;left:801.1px;transform:scaleX(0.9519);">2012-03-14</span><span class="t" id="t152" style="font-size:11.5px;line-height:15px;top:511.1px;color:#000;left:801.1px;transform:scaleX(0.9111);">14.3</span><span class="t" id="t153" style="font-size:11.5px;line-height:15px;top:524.1px;color:#000;left:801.1px;transform:scaleX(0.9381);">14.3.12</span><span class="t" id="t154" style="font-size:11.5px;line-height:15px;top:537.1px;color:#000;left:801.1px;transform:scaleX(0.9382);">14.03.12</span><span class="t" id="t155" style="font-size:11.5px;line-height:15px;top:550.1px;color:#000;left:801.1px;transform:scaleX(0.9483);">14. Mrz.</span><span class="t" id="t156" style="font-size:12px;line-height:16px;top:567.0px;color:#1a1a1a;left:797.1px;transform:scaleX(0.9110);">Gebietsschema:</span><div class="a" style="left:797.4px;top:580.4px;width:8px;height:1px;background:#1a1a1a"></div><div class="a" style="left:797px;top:585px;width:441px;height:21px;background:#fff;border:1px solid #8a8a8a"></div><div class="a" style="left:1221px;top:586.5px;width:16px;height:18px;border:1px solid #bdbdbd;background:#fff"></div><svg width="10" height="6" style="left:1223.5px;top:592.5px"><path d="M.5 .5L5 5L9.5 .5" stroke="#555" stroke-width="1.1" fill="none"/></svg><span class="t" id="t157" style="font-size:11.5px;line-height:15px;top:587.7px;color:#000;left:801.1px;transform:scaleX(0.9890);">Deutsch (Deutschland)</span><span class="t" id="t158" style="font-size:11.5px;line-height:15px;top:695.6px;color:#000;left:666.0px;transform:scaleX(1.0074);">Datumsformate zeigen die fortlaufenden Zahlen des Datums und der Uhrzeit als Datumswerte an.</span><span class="t" id="t159" style="font-size:11.5px;line-height:15px;top:708.6px;color:#000;left:666.0px;transform:scaleX(1.0129);">Datumsformate, die mit einem Sternchen (*) beginnen, reagieren auf Änderungen an regionalen Datums- und</span><span class="t" id="t160" style="font-size:11.5px;line-height:15px;top:721.6px;color:#000;left:666.0px;transform:scaleX(1.0083);">Uhrzeiteinstellungen, die für das Betriebssystem angegeben sind. Formate ohne Sternchen sind von</span><span class="t" id="t161" style="font-size:11.5px;line-height:15px;top:734.6px;color:#000;left:666.0px;transform:scaleX(1.0219);">Betriebssystemeinstellungen nicht betroffen.</span><div class="a" style="left:1088px;top:778.5px;width:74px;height:22px;background:#fdfdfd;border:1px solid #0067c0;border-radius:4px;box-shadow:inset 0 0 0 1px rgba(0,103,192,.3)"></div><div class="a" style="left:1172.7px;top:778.5px;width:72.5px;height:22px;background:#fdfdfd;border:1px solid #d0d0d0;border-bottom-color:#bcbcbc;border-radius:4px"></div><span class="t" id="t162" style="font-size:12px;line-height:16px;top:781.7px;color:#000;left:1116.8px;transform:scaleX(0.8937);">OK</span><span class="t" id="t163" style="font-size:12px;line-height:16px;top:781.7px;color:#000;left:1181.1px;transform:scaleX(0.9544);">Abbrechen</span><svg width="1277" height="826" style="left:0;top:0"><path d="M565 411.3C564 407.6 567.6 405 571 406.8L637.6 441.2L635.8 437.8C634.4 434.4 638.6 431.4 642.4 433.2C644.8 434.4 645.8 436.4 647.4 440L658.9 464.6C660 467.4 658.8 468.4 656.4 468.1L623.4 465.6C618.6 465.1 618.4 459.6 622.8 458.8L631.4 457.3L567.2 414.4C566 413.6 565.3 412.6 565 411.3Z" fill="#e31b1b"/></svg><svg width="1277" height="826" style="left:0;top:0"><path d="M41.500 34H50.500A1.500 1.500 0 0 1 52 35.500V40H40V35.500A1.500 1.500 0 0 1 41.500 34Z" fill="#5fc35a"/><path d="M46 34H50.500A1.500 1.500 0 0 1 52 35.500V39H46Z" fill="#9adf68"/><path d="M40 39.500H52V48.500A1.500 1.500 0 0 1 50.500 50H41.500A1.500 1.500 0 0 1 40 48.500Z" fill="#1f7d3d"/><path d="M46 39.500H52V44.500H46Z" fill="#2a8f45"/><rect x="37" y="39" width="9.500" height="9.500" rx="1" fill="#0f5c30"/><path d="M39.700 41.300L43.800 46.300M43.800 41.300L39.700 46.300" stroke="#fff" stroke-width="1.300"/><rect x="205.5" y="31.5" width="41.5" height="19.5" rx="9.75" fill="#f6f6f6" stroke="#a6a6a6"/><circle cx="236.8" cy="41.3" r="6.6" fill="#b9b9b9"/><path d="M212.5 41.4L216 45L221.8 37.6" stroke="#b0b0b0" stroke-width="1.3" fill="none"/><g stroke="#bababa" fill="none" stroke-width="1.1"><path d="M266 49.5H261.5A2 2 0 0 1 259.5 47.5V36A2 2 0 0 1 261.5 34H271L275 38V41"/><path d="M263 34V39.5H270.5V34M263 49.5V43.5H266"/><path d="M268.2 44.5A3.6 3.6 0 0 1 274.6 43M275.4 46A3.6 3.6 0 0 1 269 47.8M274.8 40.8V43.2H272.4M268.8 50V47.6H271.2"/></g><g stroke="#bababa" fill="none" stroke-width="1.2" stroke-linecap="round" stroke-linejoin="round"><path d="M289.5 35V40.5H295M290 40.300C292 36.500 297.500 34 300.700 36.700C303.500 39.200 302.800 42.300 300.500 44.300L294.300 49.500"/><path d="M341.5 35V40.5H336M341 40.300C339 36.500 333.500 34 330.300 36.700C327.500 39.200 328.200 42.300 330.500 44.300L336.700 49.500"/><path d="M369.5 39H377.5"/></g><path d="M309.7 40.2L312.2 42.6L314.7 40.2" stroke="#bababa" stroke-width="1.35" fill="none" stroke-linecap="round" stroke-linejoin="round"/><path d="M349.5 40.2L352.0 42.6L354.5 40.2" stroke="#bababa" stroke-width="1.35" fill="none" stroke-linecap="round" stroke-linejoin="round"/><path d="M371.0 43.1L373.5 45.5L376.0 43.1" stroke="#bababa" stroke-width="1.35" fill="none" stroke-linecap="round" stroke-linejoin="round"/><path d="M540.2 40.9L545.0 45.5L549.8 40.9" stroke="#bababa" stroke-width="1.2" fill="none" stroke-linecap="round" stroke-linejoin="round"/><g stroke="#bcbcbc" fill="none" stroke-width="1.2"><circle cx="607.3" cy="40" r="4.7"/><path d="M603.8 43.6L598.8 49.6" stroke-linecap="round"/></g><g stroke="#bababa" fill="none" stroke-width="1"><path d="M955 42.5H964.5"/><rect x="1002.5" y="37.5" width="9" height="9" rx="1"/><path d="M1050 37.5L1059.5 47M1059.5 37.5L1050 47"/></g><path d="M1009.900 76.300H1020.200V83.200H1014.300L1011.600 85.700V83.200H1009.900Z" stroke="#222" fill="none" stroke-width="1.2" stroke-linejoin="miter"/><g stroke="#fff" fill="none" stroke-width="1.2" stroke-linejoin="round" stroke-linecap="round"><path d="M1044 79H1041.5A1 1 0 0 0 1040.5 80V86A1 1 0 0 0 1041.5 87H1049.5A1 1 0 0 0 1050.5 86V84.5"/><path d="M1047.5 76L1051.5 79.3L1047.5 82.6V80.6C1045.5 80.5 1044 81.5 1043.2 83.8C1043.2 80.3 1044.8 78.2 1047.5 78Z"/></g><path d="M1057.0 79.9L1059.5 82.3L1062.0 79.9" stroke="#fff" stroke-width="1.4" fill="none" stroke-linecap="round" stroke-linejoin="round"/><g fill="none"><path d="M57.2 110.2H76V132H57.2Z" fill="#f3f2f9" stroke="none"/><path d="M60.5 110.3H57.200V131.600H68.500M73 110.300H75.900V116.400" stroke="#f2a33a" stroke-width="1.9"/><path d="M60.5 112.300V108.900H63.800C64.200 106.900 65.400 105.800 66.800 105.800C68.200 105.800 69.400 106.900 69.800 108.900H73V112.300Z" stroke="#85808f" fill="#fbfbfd" stroke-width="1.1"/><rect x="69.700" y="117.800" width="12.700" height="16.300" stroke="#333" fill="#fafafa" stroke-width="1.3"/></g><path d="M64.2 161.4L66.7 163.8L69.2 161.4" stroke="#3a3a3a" stroke-width="1.35" fill="none" stroke-linecap="round" stroke-linejoin="round"/><g fill="none" stroke-linecap="round"><path d="M104.2 104.800L109.300 116M109.500 104.800L104.400 116" stroke="#444" stroke-width="1.2"/><circle cx="104.100" cy="117.900" r="1.550" stroke="#2b9be8" stroke-width="1.3"/><circle cx="110" cy="117.900" r="1.550" stroke="#2b9be8" stroke-width="1.3"/></g><g fill="#fff" stroke="#555" stroke-width="1.1"><path d="M100.2 130.5H106.5V142.5H100.2Z" /><path d="M104 133.5H110.5L114.5 137.5V145H104Z"/><path d="M110.3 133.7V137.7H114.3M106.5 140.5H112M106.5 142.7H112" fill="none" stroke-width=".9"/></g><path d="M128.0 136.9L130.5 139.3L133.0 136.9" stroke="#3a3a3a" stroke-width="1.35" fill="none" stroke-linecap="round" stroke-linejoin="round"/><g stroke-linejoin="round"><path d="M108.800 161.200L112.600 157.300A1 1 0 0 1 114 157.300L114.700 158A1 1 0 0 1 114.700 159.400L110.800 163.200Z" fill="#fff" stroke="#444" stroke-width="1.1"/><path d="M106.300 159.800L112.200 165.300L110.600 166.900L104.800 161.300Z" fill="#fff" stroke="#444" stroke-width="1.1"/><path d="M104.300 162L110 167.300L106.600 170.300L99.500 164Z" fill="#fbd9bd" stroke="#ee7d31" stroke-width="1.2"/><path d="M102.300 166.500L106 163.600" stroke="#ee7d31" stroke-width=".9"/></g><path d="M139.5 187.3V182.5H144.3" stroke="#3a3a3a" fill="none" stroke-width="1.1"/><path d="M142.3 185.3L146.8 189.8M143.1 190.1H147.1V186.1" stroke="#3a3a3a" fill="none" stroke-width="1.1"/><path d="M300.8 187.3V182.5H305.6" stroke="#3a3a3a" fill="none" stroke-width="1.1"/><path d="M303.6 185.3L308.1 189.8M304.40000000000003 190.1H308.40000000000003V186.1" stroke="#3a3a3a" fill="none" stroke-width="1.1"/><path d="M443 187.3V182.5H447.8" stroke="#3a3a3a" fill="none" stroke-width="1.1"/><path d="M445.8 185.3L450.3 189.8M446.6 190.1H450.6V186.1" stroke="#3a3a3a" fill="none" stroke-width="1.1"/><path d="M550 187.3V182.5H554.8" stroke="#3a3a3a" fill="none" stroke-width="1.1"/><path d="M552.8 185.3L557.3 189.8M553.6 190.1H557.6V186.1" stroke="#3a3a3a" fill="none" stroke-width="1.1"/><path d="M250.5 111.3L253.0 113.7L255.5 111.3" stroke="#3a3a3a" stroke-width="1.35" fill="none" stroke-linecap="round" stroke-linejoin="round"/><path d="M295.5 111.3L298.0 113.7L300.5 111.3" stroke="#3a3a3a" stroke-width="1.35" fill="none" stroke-linecap="round" stroke-linejoin="round"/><path d="M239.0 137.1L241.5 139.5L244.0 137.1" stroke="#3a3a3a" stroke-width="1.35" fill="none" stroke-linecap="round" stroke-linejoin="round"/><path d="M271 133.700L273.100 131.500L275.200 133.700" stroke="#2b8ad8" stroke-width="1.1" fill="none"/><path d="M296.300 131.600L298.500 133.800L300.700 131.600" stroke="#2b8ad8" stroke-width="1.1" fill="none"/><g stroke="#555" fill="none"><path d="M163.5 156.5H178M163.5 163.5H178M163.5 156.5V170M170.7 156.5V170M178 156.5V170" stroke-dasharray="1 1.2" stroke-width="1"/><path d="M163 170.5H178.5" stroke="#222" stroke-width="1.4"/></g><path d="M187.2 163.1L189.7 165.5L192.2 163.1" stroke="#3a3a3a" stroke-width="1.35" fill="none" stroke-linecap="round" stroke-linejoin="round"/><g fill="none" stroke-linejoin="round"><path d="M214.200 157L219.300 162.300L214.200 166.600L209.600 161.600Z" stroke="#444" stroke-width="1.1" fill="#fff"/><path d="M213.800 160V157.600C213.800 155.900 216.300 155.900 216.300 157.600V158.800" stroke="#444" stroke-width="1" fill="none"/><path d="M219.400 160.200C221.300 160.800 222 162.800 220.900 165.400" stroke="#2b7cd3" stroke-width="1.5" fill="none"/></g><path d="M231.0 163.1L233.5 165.5L236.0 163.1" stroke="#3a3a3a" stroke-width="1.35" fill="none" stroke-linecap="round" stroke-linejoin="round"/><path d="M271.9 163.1L274.4 165.5L276.9 163.1" stroke="#3a3a3a" stroke-width="1.35" fill="none" stroke-linecap="round" stroke-linejoin="round"/><path d="M325.9 104.6H339.9" stroke="#444" stroke-width="1.2" fill="none"/><path d="M328.4 108.6H337.5" stroke="#444" stroke-width="1.2" fill="none"/><path d="M325.9 112.5H339.9" stroke="#444" stroke-width="1.2" fill="none"/><path d="M352.0 107.5H366.0" stroke="#444" stroke-width="1.2" fill="none"/><path d="M354.5 111.5H363.6" stroke="#444" stroke-width="1.2" fill="none"/><path d="M352.0 115.5H366.0" stroke="#444" stroke-width="1.2" fill="none"/><path d="M377.9 111.5H391.9" stroke="#444" stroke-width="1.2" fill="none"/><path d="M380.4 115.5H389.5" stroke="#444" stroke-width="1.2" fill="none"/><path d="M377.9 119.5H391.9" stroke="#444" stroke-width="1.2" fill="none"/><path d="M325.9 131.1H339.9" stroke="#444" stroke-width="1.2" fill="none"/><path d="M325.9 135.2H335.5" stroke="#444" stroke-width="1.2" fill="none"/><path d="M325.9 139.3H339.9" stroke="#444" stroke-width="1.2" fill="none"/><path d="M325.9 143.4H335.5" stroke="#444" stroke-width="1.2" fill="none"/><path d="M352.0 131.1H366.0" stroke="#444" stroke-width="1.2" fill="none"/><path d="M354.5 135.2H363.6" stroke="#444" stroke-width="1.2" fill="none"/><path d="M352.0 139.3H366.0" stroke="#444" stroke-width="1.2" fill="none"/><path d="M354.5 143.4H363.6" stroke="#444" stroke-width="1.2" fill="none"/><path d="M378.0 131.1H392.0" stroke="#444" stroke-width="1.2" fill="none"/><path d="M382.4 135.2H392.0" stroke="#444" stroke-width="1.2" fill="none"/><path d="M378.0 139.3H392.0" stroke="#444" stroke-width="1.2" fill="none"/><path d="M382.4 143.4H392.0" stroke="#444" stroke-width="1.2" fill="none"/><path d="M418.9 112.6C419.3 114.8 418.3 116.3 416 116.4H411.4M413.8 113.9L411.3 116.4L414.4 119.2" stroke="#2b7cd3" fill="none" stroke-width="1.2"/><g stroke="#bdbdbd" fill="none" stroke-width="1"><rect x="403.8" y="130.5" width="14.5" height="14.5"/><path d="M403.8 134H418.3M403.8 141.5H418.3M411 130.5V134M411 141.5V145M406 137.7H416M407.8 136L406 137.7L407.8 139.4M414.2 136L416 137.7L414.2 139.4"/></g><path d="M432.1 137.2L434.6 139.6L437.1 137.2" stroke="#c4c4c4" stroke-width="1.35" fill="none" stroke-linecap="round" stroke-linejoin="round"/><path d="M325.9 157.5H339.9" stroke="#444" stroke-width="1.2" fill="none"/><path d="M325.9 169.8H339.9" stroke="#444" stroke-width="1.2" fill="none"/><path d="M334.4 161.6H339.9" stroke="#444" stroke-width="1.2" fill="none"/><path d="M334.4 165.7H339.9" stroke="#444" stroke-width="1.2" fill="none"/><path d="M331.7 163.6H326.4M328.6 161.4L326.4 163.6L328.6 165.8" stroke="#2b7cd3" fill="none" stroke-width="1.2"/><path d="M352 157.5H366" stroke="#444" stroke-width="1.2" fill="none"/><path d="M352 169.8H366" stroke="#444" stroke-width="1.2" fill="none"/><path d="M360.5 161.6H366" stroke="#444" stroke-width="1.2" fill="none"/><path d="M360.5 165.7H366" stroke="#444" stroke-width="1.2" fill="none"/><path d="M352.2 163.6H357.5M355.3 161.4L357.5 163.6L355.3 165.8" stroke="#2b7cd3" fill="none" stroke-width="1.2"/><path d="M385.1 170.4L395.7 160.7M392.4 160.5H395.900V164" stroke="#2b7cd3" fill="none" stroke-width="1.2"/><path d="M402.1 162.8L404.6 165.2L407.1 162.8" stroke="#3a3a3a" stroke-width="1.35" fill="none" stroke-linecap="round" stroke-linejoin="round"/><path d="M544.9 111.3L547.4 113.7L549.9 111.3" stroke="#3a3a3a" stroke-width="1.35" fill="none" stroke-linecap="round" stroke-linejoin="round"/><path d="M490.7 137.2L493.2 139.6L495.7 137.2" stroke="#3a3a3a" stroke-width="1.35" fill="none" stroke-linecap="round" stroke-linejoin="round"/><g fill="none"><rect x="467.8" y="133.5" width="14" height="9" stroke="#555" stroke-width="1.1"/><circle cx="472.3" cy="138" r="1.8" stroke="#555" stroke-width="1"/><path d="M476.3 141.2V145.3A3.2 1.3 0 0 0 482.7 145.3V141.2" fill="#fbe3c8" stroke="#e8912d" stroke-width="1"/><ellipse cx="479.5" cy="141.2" rx="3.2" ry="1.3" fill="#fbe3c8" stroke="#e8912d" stroke-width="1"/><path d="M476.3 143.3A3.2 1.3 0 0 0 482.7 143.3" stroke="#e8912d" stroke-width=".9"/></g><path d="M476.400 160H467.800M470.600 157.200L467.800 160L470.600 162.800" stroke="#2b7cd3" fill="none" stroke-width="1.2"/><path d="M493.200 167.400H501.600M498.800 164.600L501.600 167.400L498.800 170.200" stroke="#2b7cd3" fill="none" stroke-width="1.2"/><rect x="574.3" y="105.3" width="15.5" height="13.5" fill="#fff" stroke="#555" stroke-width="1.1"/><path d="M574.3 109.8H589.8M574.3 114.3H589.8M579.5 105.3V118.8M584.6999999999999 105.3V118.8" stroke="#555" stroke-width="1" fill="none"/><rect x="574.8" y="105.8" width="9.900" height="4" fill="#ef6a6e"/><rect x="579.9" y="110.2" width="4.8" height="4" fill="#ef6a6e"/><rect x="574.8" y="114.6" width="9.900" height="3.7" fill="#ef6a6e"/><rect x="575.600" y="110.200" width="3" height="4" fill="#5aa0dc"/><path d="M719.9 112.1L722.4 114.5L724.9 112.1" stroke="#3a3a3a" stroke-width="1.35" fill="none" stroke-linecap="round" stroke-linejoin="round"/><rect x="574.3" y="131.6" width="15.5" height="13.5" fill="#fff" stroke="#555" stroke-width="1.1"/><path d="M574.3 136.1H589.8M574.3 140.6H589.8M579.5 131.6V145.1M584.6999999999999 131.6V145.1" stroke="#555" stroke-width="1" fill="none"/><path d="M579.8 136.4H589.5V145H579.8Z" fill="#9cc7ee"/><path d="M590.800 134.800L583.600 142.600" stroke="#fff" stroke-width="4" fill="none"/><path d="M590.800 134.800L584 142.200" stroke="#444" stroke-width="2" stroke-linecap="round" fill="none"/><path d="M584.600 142.800C583.600 145.400 581.400 146.600 578.800 146.400C580.600 145.200 580.800 143.200 582.400 141.400Z" fill="#2b7cd3"/><path d="M719.2 138.0L721.7 140.4L724.2 138.0" stroke="#3a3a3a" stroke-width="1.35" fill="none" stroke-linecap="round" stroke-linejoin="round"/><rect x="574.3" y="158" width="15.5" height="13.5" fill="#fff" stroke="#555" stroke-width="1.1"/><path d="M574.3 161.2H589.8M577.5 158V171.5" stroke="#555" fill="none"/><path d="M578 161.8H589.3V171H578Z" fill="#9cc7ee"/><path d="M590.800 161L583.600 168.800" stroke="#fff" stroke-width="4" fill="none"/><path d="M590.800 161L584 168.400" stroke="#444" stroke-width="2" stroke-linecap="round" fill="none"/><path d="M584.600 169C583.600 171.600 581.400 172.800 578.800 172.600C580.600 171.400 580.800 169.400 582.400 167.600Z" fill="#2b7cd3"/><path d="M712.1 163.8L714.6 166.2L717.1 163.8" stroke="#3a3a3a" stroke-width="1.35" fill="none" stroke-linecap="round" stroke-linejoin="round"/><rect x="756.3" y="105.3" width="15.5" height="13.5" fill="#fff" stroke="#555" stroke-width="1.1"/><path d="M756.3 109.8H771.8M756.3 114.3H771.8M761.5 105.3V118.8M766.6999999999999 105.3V118.8" stroke="#555" stroke-width="1" fill="none"/><rect x="761.6" y="109.9" width="9.8" height="4.4" fill="#9cc7ee" stroke="#2b7cd3" stroke-width=".9"/><path d="M761 112H756.6M758.8 110L756.6 112L758.8 114" stroke="#2b7cd3" stroke-width="1.1" fill="none"/><path d="M840.7 112.1L843.2 114.5L845.7 112.1" stroke="#3a3a3a" stroke-width="1.35" fill="none" stroke-linecap="round" stroke-linejoin="round"/><rect x="756.3" y="131.6" width="15.5" height="13.5" fill="#fff" stroke="#555" stroke-width="1.1"/><path d="M756.3 136.1H771.8M756.3 140.6H771.8M761.5 131.6V145.1M766.6999999999999 131.6V145.1" stroke="#555" stroke-width="1" fill="none"/><rect x="759.5" y="136" width="5.5" height="4.6" fill="#9cc7ee" stroke="#2b7cd3" stroke-width=".9"/><path d="M766.6 135.4L771.6 141.2M771.6 135.4L766.6 141.2" stroke="#e8484f" stroke-width="1.2" fill="none"/><path d="M838.2 138.0L840.7 140.4L843.2 138.0" stroke="#3a3a3a" stroke-width="1.35" fill="none" stroke-linecap="round" stroke-linejoin="round"/><rect x="756.8" y="160" width="14.5" height="12" fill="#fff" stroke="#555" stroke-width="1.1"/><path d="M756.8 164H771.3M756.8 168H771.3M760.5 160V172M767.5 160V172" stroke="#555" fill="none"/><rect x="760.5" y="164" width="7" height="4.2" fill="#9cc7ee" stroke="#2b7cd3" stroke-width=".9"/><path d="M757.5 157.3H770.7M757.5 155.8V158.8M770.7 155.8V158.8" stroke="#2b7cd3" fill="none" stroke-width="1"/><path d="M818.2 163.8L820.7 166.2L823.2 163.8" stroke="#3a3a3a" stroke-width="1.35" fill="none" stroke-linecap="round" stroke-linejoin="round"/><path d="M889.8 107.3V105.3H878.2L884.6 112L878.2 118.7H889.8V116.6" stroke="#444" fill="none" stroke-width="1.2" stroke-linejoin="round"/><path d="M905.1 111.3L907.6 113.7L910.1 111.3" stroke="#3a3a3a" stroke-width="1.35" fill="none" stroke-linecap="round" stroke-linejoin="round"/><path d="M948.0 111.3L950.5 113.7L953.0 111.3" stroke="#3a3a3a" stroke-width="1.35" fill="none" stroke-linecap="round" stroke-linejoin="round"/><path d="M897.9 137.1L900.4 139.5L902.9 137.1" stroke="#3a3a3a" stroke-width="1.35" fill="none" stroke-linecap="round" stroke-linejoin="round"/><path d="M948.0 137.1L950.5 139.5L953.0 137.1" stroke="#3a3a3a" stroke-width="1.35" fill="none" stroke-linecap="round" stroke-linejoin="round"/><path d="M897.9 163.3L900.4 165.7L902.9 163.3" stroke="#3a3a3a" stroke-width="1.35" fill="none" stroke-linecap="round" stroke-linejoin="round"/><path d="M933.6 109.5H942.2L939.2 113V116.8L936.6 115.5V113Z" stroke="#444" fill="none" stroke-width="1.1" stroke-linejoin="round"/><rect x="876.5" y="131.3" width="15" height="13.3" fill="#fff" stroke="#444" stroke-width="1.1"/><path d="M876.5 134.3H891.5" stroke="#444"/><path d="M884 135.8V142.3M881.3 139.8L884 142.5L886.7 139.8" stroke="#2b7cd3" fill="none" stroke-width="1.2"/><g stroke="#444" fill="none" stroke-width="1.2"><circle cx="936.8" cy="135.6" r="4.8"/><path d="M933.3 139.2L927.2 145.3" stroke-linecap="round"/></g><path d="M876.600 165.400L885.600 157.200L891 162.600L882 171.400Z" fill="#fff" stroke="#b146b8" stroke-width="1.1" stroke-linejoin="round"/><path d="M876.600 165.400L880.400 161.900L885.800 167.600L882 171.400Z" fill="#dc8fe0" stroke="#b146b8" stroke-width="1.1" stroke-linejoin="round"/><g stroke="#c2500e" fill="none" stroke-width="1.3"><rect x="985.5" y="105.5" width="27.5" height="27"/><rect x="989" y="109" width="8.8" height="8.3"/><rect x="1000.6" y="109" width="8.8" height="8.3"/><rect x="989" y="120.6" width="8.8" height="8.3"/><rect x="1000.6" y="120.6" width="8.8" height="8.3"/></g><path d="M1051.2 180.5L1056.5 185.5L1061.8 180.5" stroke="#333" stroke-width="1.3" fill="none" stroke-linecap="round" stroke-linejoin="round"/><path d="M1056.8 213.2L1061.8 218.0L1066.8 213.2" stroke="#9a9a9a" stroke-width="1.1" fill="none" stroke-linecap="round" stroke-linejoin="round"/><path d="M114.7 216.1L119.4 220.7L124.2 216.1" stroke="#333" stroke-width="1.3" fill="none" stroke-linecap="round" stroke-linejoin="round"/><circle cx="140.8" cy="213.200" r="1.05" fill="#444"/><circle cx="140.8" cy="217.300" r="1.05" fill="#444"/><circle cx="140.8" cy="221.400" r="1.05" fill="#444"/><g stroke="#c0c0c0" fill="none" stroke-width="1.1"><path d="M158 211.5L169.5 223M169.5 211.5L158 223"/><path d="M180 217.5L184.5 222L195 211.5"/></g><path d="M224.2 215.7L229.0 220.3L233.8 215.7" stroke="#9a9a9a" stroke-width="1.1" fill="none" stroke-linecap="round" stroke-linejoin="round"/><g stroke="#222" fill="none" stroke-width="1.1" stroke-linecap="round" stroke-linejoin="round"><circle cx="88" cy="713.700" r="1.600"/><path d="M82.600 716.300C82.400 715.200 83.400 714.900 84.300 715.200L86.800 716.200H89.200L91.700 715.200C92.600 714.900 93.600 715.200 93.400 716.300C93.300 716.900 92.900 717.100 92.300 717.300L90 718.200V719.600M86 718.200L83.700 717.300C83.100 717.100 82.700 716.900 82.600 716.300M86 718.200V720L84 724.600C83.700 725.400 84.500 726 85.200 725.400L88 721.600L88.800 722.600"/><path d="M89.800 719.600L95.800 725.600M95.800 719.600L89.800 725.600"/></g></svg><span class="t" id="t164" style="font-size:29px;line-height:38px;top:603.0px;color:rgba(255,255,255,.92);left:540.7px;transform:scaleX(0.9443);text-shadow:1px 1px 1.2px rgba(0,0,0,.2),-.6px -.6px .8px rgba(0,0,0,.1);">Windows-FAQ</span><span class="t" id="t165" style="font-size:10.5px;line-height:14px;top:100.9px;color:#444;left:405.4px;transform:scaleX(1.0096);">ab</span><span class="t" id="t166" style="font-size:10.5px;line-height:14px;top:108.3px;color:#444;left:405.7px;transform:scaleX(0.7238);">c</span><div class="a" style="left:378.4px;top:154.6px;width:14px;height:14px;transform:rotate(-45deg)"><span class="t" id="t167" style="font-size:10px;line-height:13px;top:0.0px;color:#444;left:1.5px;transform:scaleX(0.9888);">ab</span></div><span class="t" id="t168" style="font-size:9px;line-height:12px;top:153.6px;color:#333;left:477.8px;transform:scaleX(0.8374);">0</span><span class="t" id="t169" style="font-size:9px;line-height:12px;top:161.6px;color:#333;left:470.4px;transform:scaleX(0.9189);">.00</span><span class="t" id="t170" style="font-size:9px;line-height:12px;top:153.6px;color:#333;left:496.6px;transform:scaleX(0.9189);">.00</span><span class="t" id="t171" style="font-size:9px;line-height:12px;top:161.6px;color:#333;left:502.2px;transform:scaleX(0.7983);">.0</span><span class="t" id="t172" style="font-size:10.5px;line-height:14px;top:100.6px;color:#2b8ad8;font-weight:700;left:926.2px;transform:scaleX(0.7901);">A</span><span class="t" id="t173" style="font-size:10.5px;line-height:14px;top:109.9px;color:#333;font-weight:700;left:926.2px;transform:scaleX(0.9032);">Z</span></body></html>
